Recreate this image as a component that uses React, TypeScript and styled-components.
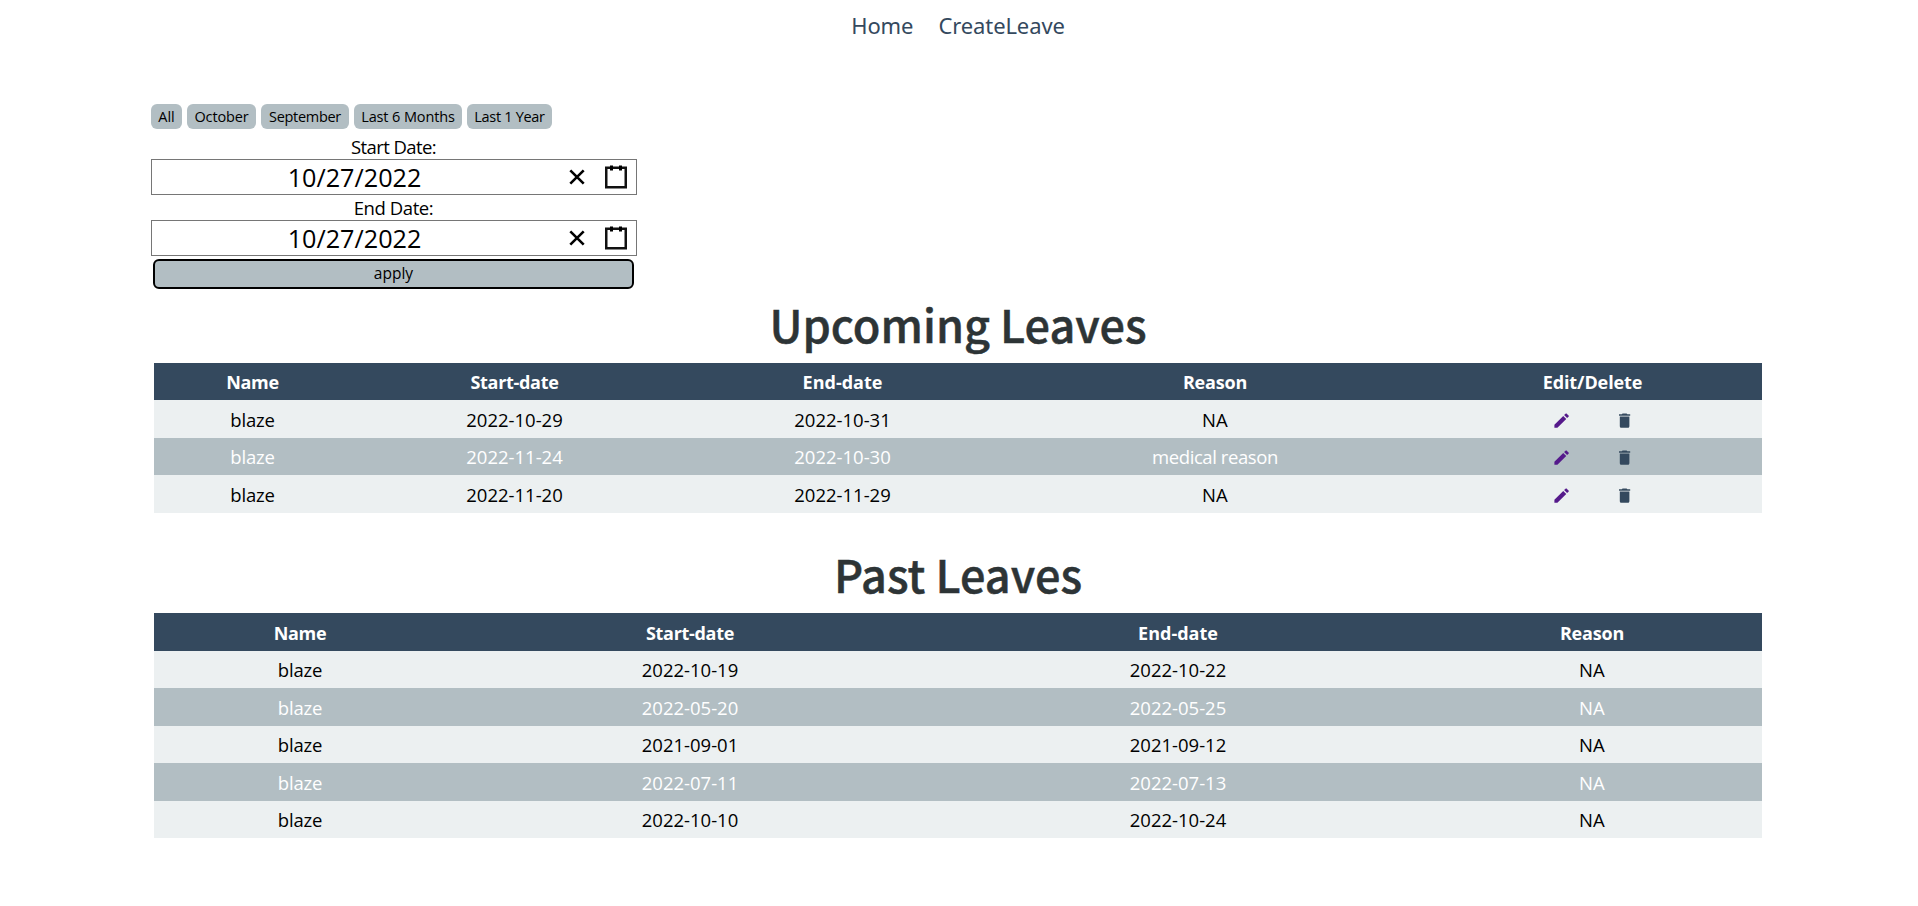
import React from "react";
import styled, { createGlobalStyle } from "styled-components";
import { MdDelete, MdEdit } from "react-icons/md";

const GlobalStyle = createGlobalStyle`
  * { box-sizing: border-box; }
  body {
    margin: 0;
    background: #fff;
    color: #000;
    font-family: "Open Sans", sans-serif;
    font-size: 18.5px;
  }
`;

const Nav = styled.nav`
  display: flex;
  justify-content: center;
  gap: 25px;
  height: 104px;
  padding: 10px 2px 0 0;
`;

const NavLink = styled.a`
  color: #34495e;
  font-family: "Noto Sans", sans-serif;
  font-size: 22px;
  line-height: 30px;
  letter-spacing: -0.1px;
  text-decoration: none;
`;

const Main = styled.main`
  display: flex;
  flex-direction: column;
  padding: 0 156px 0 151px;
`;

const Filters = styled.section`
  display: flex;
  flex-direction: column;
  width: 486px;
`;

const ChipRow = styled.div`
  display: flex;
  gap: 5px;
  margin-bottom: 5px;
`;

const Chip = styled.button<{ $width: number; $tracking: number }>`
  width: ${(p) => p.$width}px;
  height: 25px;
  padding: 0;
  border: 0;
  border-radius: 6px;
  background: #b2bec3;
  color: #000;
  font-family: inherit;
  font-size: 14.5px;
  line-height: 25px;
  letter-spacing: ${(p) => p.$tracking}px;
  white-space: nowrap;
`;

const Label = styled.label<{ $tracking: number }>`
  height: 25px;
  padding-right: 1px;
  line-height: 25px;
  text-align: center;
  letter-spacing: ${(p) => p.$tracking}px;
`;

const DateBox = styled.div`
  display: flex;
  align-items: center;
  height: 36px;
  padding-right: 9px;
  border: 1px solid #767676;
`;

const DateText = styled.span`
  flex: 1;
  padding-right: 11px;
  font-size: 25.2px;
  line-height: 35px;
  text-align: center;
`;

const IconSlot = styled.svg`
  display: block;
  flex: none;
`;

const CalendarIcon = styled(IconSlot)`
  margin-left: 19px;
`;

const ApplyButton = styled.button`
  height: 30px;
  margin: 3px 3px 0 2px;
  padding: 0 0 2px;
  border: 2px solid #000;
  border-radius: 6px;
  background: #b2bec3;
  color: #000;
  font-family: inherit;
  font-size: 15.5px;
  line-height: 24px;
`;

const Title = styled.h1<{ $top: number }>`
  margin: ${(p) => p.$top}px 0 4.8px 3px;
  color: #2d3436;
  font-family: "Noto Sans CJK JP", sans-serif;
  font-size: 45px;
  font-weight: 500;
  line-height: 68px;
  text-align: center;
  -webkit-text-stroke: 0.5px #2d3436;
`;

const Table = styled.table`
  display: block;
  width: 1608px;
  margin-left: 3px;
`;

const Head = styled.thead`
  display: block;
  background: #34495e;
  color: #fff;
`;

const Body = styled.tbody`
  display: block;
`;

const Row = styled.tr<{ $columns: string }>`
  display: grid;
  grid-template-columns: ${(p) => p.$columns};
  height: 37.5px;
  ${Body} & {
    background: #ecf0f1;
  }
  ${Body} &:nth-child(even) {
    background: #b2bec3;
    color: #fff;
  }
`;

const HeadCell = styled.th<{ $tracking: number }>`
  padding: 0.5px 0 0;
  font-size: 18px;
  font-weight: 700;
  line-height: 38.5px;
  letter-spacing: ${(p) => p.$tracking}px;
  text-align: center;
`;

const Cell = styled.td<{ $tracking: number }>`
  padding: 0.45px 0 0;
  line-height: 38.5px;
  letter-spacing: ${(p) => p.$tracking}px;
  text-align: center;
`;

const ActionCell = styled.td`
  display: flex;
  align-items: center;
  justify-content: center;
  gap: 43.3px;
  padding: 1px 0 0 1.6px;
  color: #34495e;
`;

const EditLink = styled.a`
  display: flex;
  color: #551a8b;
`;

const chips = [
  { text: "All", width: 31, tracking: 0 },
  { text: "October", width: 69, tracking: -0.15 },
  { text: "September", width: 88, tracking: -0.3 },
  { text: "Last 6 Months", width: 108, tracking: -0.12 },
  { text: "Last 1 Year", width: 85, tracking: -0.3 },
];

const headTracking: Record<string, number> = {
  Name: -0.35,
  "Start-date": -0.3,
  "End-date": 0,
  Reason: -0.2,
  "Edit/Delete": -0.1,
};

const textTracking: Record<string, number> = { blaze: -0.18, "medical reason": -0.42, NA: 0.3 };

const upcoming = [
  ["blaze", "2022-10-29", "2022-10-31", "NA"],
  ["blaze", "2022-11-24", "2022-10-30", "medical reason"],
  ["blaze", "2022-11-20", "2022-11-29", "NA"],
];

const past = [
  ["blaze", "2022-10-19", "2022-10-22", "NA"],
  ["blaze", "2022-05-20", "2022-05-25", "NA"],
  ["blaze", "2021-09-01", "2021-09-12", "NA"],
  ["blaze", "2022-07-11", "2022-07-13", "NA"],
  ["blaze", "2022-10-10", "2022-10-24", "NA"],
];

function DateField({ value }: { value: string }) {
  return (
    <DateBox>
      <DateText>{value}</DateText>
      <IconSlot width="18" height="18" viewBox="0 0 18 18">
        <path d="M2.3 2.3 15.7 15.7M15.7 2.3 2.3 15.7" stroke="#000" strokeWidth="2.6" />
      </IconSlot>
      <CalendarIcon width="22" height="24" viewBox="0 0 22 24">
        <rect x="1.25" y="2.75" width="19.5" height="19.5" fill="none" stroke="#111" strokeWidth="2.5" />
        <path d="M5 .5h3v5H5zM14 .5h3v5h-3z" fill="#000" />
      </CalendarIcon>
    </DateBox>
  );
}

function LeaveTable(props: { heads: string[]; rows: string[][]; columns: string; actions?: boolean }) {
  return (
    <Table>
      <Head>
        <Row $columns={props.columns}>
          {props.heads.map((h) => (
            <HeadCell key={h} $tracking={headTracking[h]}>{h}</HeadCell>
          ))}
        </Row>
      </Head>
      <Body>
        {props.rows.map((cells, i) => (
          <Row key={i} $columns={props.columns}>
            {cells.map((text, j) => (
              <Cell key={j} $tracking={textTracking[text] ?? 0}>{text}</Cell>
            ))}
            {props.actions && (
              <ActionCell>
                <EditLink><MdEdit size={19.2} /></EditLink>
                <MdDelete size={19.2} />
              </ActionCell>
            )}
          </Row>
        ))}
      </Body>
    </Table>
  );
}

export default function App() {
  return (
    <>
      <GlobalStyle />
      <Nav>
        <NavLink>Home</NavLink>
        <NavLink>CreateLeave</NavLink>
      </Nav>
      <Main>
        <Filters>
          <ChipRow>
            {chips.map((c) => (
              <Chip key={c.text} $width={c.width} $tracking={c.tracking}>{c.text}</Chip>
            ))}
          </ChipRow>
          <Label $tracking={-0.6}>Start Date:</Label>
          <DateField value="10/27/2022" />
          <Label $tracking={-0.42}>End Date:</Label>
          <DateField value="10/27/2022" />
          <ApplyButton>apply</ApplyButton>
        </Filters>
        <Title $top={1}>Upcoming Leaves</Title>
        <LeaveTable
          heads={["Name", "Start-date", "End-date", "Reason", "Edit/Delete"]}
          rows={upcoming}
          columns="197px 327px 329px 416px 339px"
          actions
        />
        <Title $top={27.6}>Past Leaves</Title>
        <LeaveTable
          heads={["Name", "Start-date", "End-date", "Reason"]}
          rows={past}
          columns="292px 488px 488px 340px"
        />
      </Main>
    </>
  );
}
